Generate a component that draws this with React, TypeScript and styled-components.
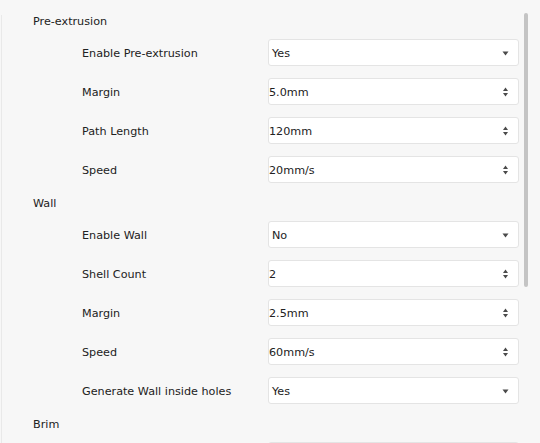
import React from "react"
import styled, { createGlobalStyle } from "styled-components"

const GlobalStyle = createGlobalStyle`
  html, body {
    margin: 0;
    padding: 0;
    background: #f7f7f7;
    overflow: hidden;
  }
  body {
    font-family: "DejaVu Sans", "Liberation Sans", sans-serif;
    color: #222222;
  }
`

type Field =
  | { label: string; kind: "select"; value: string }
  | { label: string; kind: "number"; value: string }

interface SectionData {
  title: string
  fields: Field[]
}

const sections: SectionData[] = [
  {
    title: "Pre-extrusion",
    fields: [
      { label: "Enable Pre-extrusion", kind: "select", value: "Yes" },
      { label: "Margin", kind: "number", value: "5.0mm" },
      { label: "Path Length", kind: "number", value: "120mm" },
      { label: "Speed", kind: "number", value: "20mm/s" }
    ]
  },
  {
    title: "Wall",
    fields: [
      { label: "Enable Wall", kind: "select", value: "No" },
      { label: "Shell Count", kind: "number", value: "2" },
      { label: "Margin", kind: "number", value: "2.5mm" },
      { label: "Speed", kind: "number", value: "60mm/s" },
      { label: "Generate Wall inside holes", kind: "select", value: "Yes" }
    ]
  },
  {
    title: "Brim",
    fields: [{ label: "", kind: "select", value: "" }]
  }
]

const Window = styled.div`
  position: relative;
  width: 540px;
  height: 443px;
  overflow: hidden;

  &::before {
    content: "";
    position: absolute;
    left: 1px;
    top: 15px;
    bottom: 0;
    width: 1px;
    background: #e9e9e9;
  }
`

const List = styled.div`
  display: flex;
  flex-direction: column;
  gap: 12px;
  padding-top: 13px;
`

const Heading = styled.div`
  height: 14px;
  line-height: 18px;
  padding-left: 33px;
  font-size: 11.2px;
`

const Row = styled.div`
  display: grid;
  grid-template-columns: 186px 251px;
  align-items: center;
  padding-left: 82px;
  height: 27px;
`

const Label = styled.span`
  font-size: 11.2px;
  padding-top: 2px;
  white-space: nowrap;
`

const Control = styled.div<{ $inset: number }>`
  box-sizing: border-box;
  height: 27px;
  display: flex;
  align-items: center;
  justify-content: space-between;
  padding: 1px 9px 0 ${(p) => p.$inset}px;
  background: #ffffff;
  border: 1px solid #e4e4e4;
  border-radius: 3px;
  font-size: 11.2px;
`

const Scrollbar = styled.div`
  position: absolute;
  left: 524px;
  top: 13px;
  width: 4px;
  height: 274px;
  border-radius: 2px;
  background: #c4c4c4;
`

const DropArrow = () => (
  <svg width="7" height="5" viewBox="0 0 7 5">
    <path d="M0.5 0.5 L6.5 0.5 L3.5 4.5 Z" fill="#4a4a4a" />
  </svg>
)

const Stepper = () => (
  <svg width="7" height="10" viewBox="0 0 7 10">
    <path d="M1 4 L6 4 L3.5 0.5 Z" fill="#4a4a4a" />
    <path d="M1 6 L6 6 L3.5 9.5 Z" fill="#4a4a4a" />
  </svg>
)

const FieldRow = ({ field }: { field: Field }) => (
  <Row>
    <Label>{field.label}</Label>
    <Control $inset={field.kind === "select" ? 3 : 0}>
      <span>{field.value}</span>
      {field.value && (field.kind === "select" ? <DropArrow /> : <Stepper />)}
    </Control>
  </Row>
)

export default function App() {
  return (
    <Window>
      <GlobalStyle />
      <List>
        {sections.map((section) => (
          <React.Fragment key={section.title}>
            <Heading>{section.title}</Heading>
            {section.fields.map((field, i) => (
              <FieldRow key={i} field={field} />
            ))}
          </React.Fragment>
        ))}
      </List>
      <Scrollbar />
    </Window>
  )
}
